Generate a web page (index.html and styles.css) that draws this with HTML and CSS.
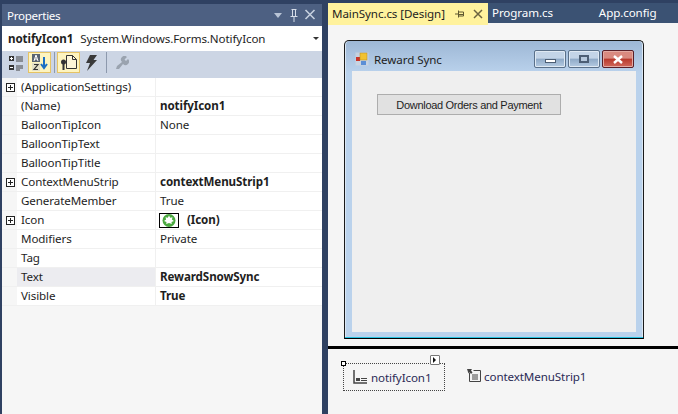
FILE: index.html
```html
<!DOCTYPE html>
<html lang="en">
<head>
  <meta charset="UTF-8">
  <title>Properties</title>
  <link rel="stylesheet" href="styles.css">
</head>
<body>
  <div class="props">
    <div class="props-title">
      <span class="props-title-text">Properties</span>
      <svg class="title-btns" width="62" height="16" viewBox="0 0 62 16">
        <path d="M17 6h8l-4 5z" fill="#b9c4d6"/>
        <path d="M34.500 2.500h5M35.500 2.500v7M38.500 2.500v7M33.500 9.500h7M37 10v5" fill="none" stroke="#d5dce8" stroke-width="1"/>
        <path d="M48.500 3l9 9M57.500 3l-9 9" stroke="#c5cfdf" stroke-width="1.600"/>
      </svg>
    </div>
    <div class="props-combo">
      <b>notifyIcon1</b><span class="combo-type">System.Windows.Forms.NotifyIcon</span>
      <span class="combo-arrow"></span>
    </div>
    <div class="props-tools">
      <svg class="tool" width="16" height="16" viewBox="0 0 16 16">
        <path d="M0 1h5v5H0zM0 10h5v5H0z" fill="#333"/>
        <path d="M1 3.500h3M2.500 2v3M1 12.500h3" stroke="#fff"/>
        <path d="M7 2h7M7 4h7M7 6h7M7 11h7M7 13h7M7 15h4" stroke="#444"/>
      </svg>
      <span class="tool-on tool-sort">
        <svg width="16" height="17" viewBox="0 0 16 17">
          <rect x="0" y="0" width="8" height="8" fill="#5a6472"/>
          <rect x="0" y="9" width="8" height="8" fill="#e3e0c8"/>
          <path d="M2 7l2-6 2 6M3 5h2" stroke="#fff" fill="none"/>
          <path d="M2 10.500h4l-4 5h4" stroke="#333" fill="none" stroke-width="1.200"/>
          <path d="M12 3v11M9 10l3 4 3-4" stroke="#1c6fc4" stroke-width="2" fill="none"/>
        </svg>
      </span>
      <span class="tool-sep"></span>
      <span class="tool-on tool-page">
        <svg width="18" height="17" viewBox="0 0 18 17">
          <path d="M6.500 1.500h6l4 4v9h-10z" fill="#fdf6d8" stroke="#333"/>
          <path d="M12.500 1.500v4h4" fill="none" stroke="#333"/>
          <circle cx="3.500" cy="8" r="2.500" fill="#333"/>
          <rect x="2.500" y="9" width="2" height="7" fill="#333"/>
        </svg>
      </span>
      <svg class="tool tool-bolt" width="13" height="16" viewBox="0 0 13 16">
        <path d="M5 0h7L8.500 5H12L2 16l3-8H1z" fill="#3a3a3a"/>
      </svg>
      <span class="tool-sep tool-sep2"></span>
      <svg class="tool tool-wrench" width="14" height="14" viewBox="0 0 14 14">
        <path d="M1 13l1-3 5-4a3.500 3.500 0 0 1 5-5L9.500 3.500l1.500 1.500L13 3a3.500 3.500 0 0 1-5 5l-4 5z" fill="#9aa3af"/>
      </svg>
    </div>
    <div class="props-grid">
      <div class="row"><span class="gutter"><i class="plus"></i></span><span class="name">(ApplicationSettings)</span><span class="val"></span></div>
      <div class="row"><span class="gutter"></span><span class="name">(Name)</span><span class="val bold">notifyIcon1</span></div>
      <div class="row"><span class="gutter"></span><span class="name">BalloonTipIcon</span><span class="val">None</span></div>
      <div class="row"><span class="gutter"></span><span class="name">BalloonTipText</span><span class="val"></span></div>
      <div class="row"><span class="gutter"></span><span class="name">BalloonTipTitle</span><span class="val"></span></div>
      <div class="row"><span class="gutter"><i class="plus"></i></span><span class="name">ContextMenuStrip</span><span class="val bold">contextMenuStrip1</span></div>
      <div class="row"><span class="gutter"></span><span class="name">GenerateMember</span><span class="val">True</span></div>
      <div class="row"><span class="gutter"><i class="plus"></i></span><span class="name">Icon</span><span class="val bold val-icon">
        <span class="icon-thumb">
          <svg width="16" height="13" viewBox="0 0 16 13">
            <circle cx="8" cy="6.500" r="6.500" fill="#4aa83f"/>
            <path d="M8 1.500l1.200 2.300 2.300-.6-.6 2.400L13 7l-2.500 1 .3 2L8 9 5.200 10l.3-2L3 7l2.100-1.400-.6-2.400 2.300.6z" fill="#fff"/>
          </svg>
        </span>(Icon)</span></div>
      <div class="row"><span class="gutter"></span><span class="name">Modifiers</span><span class="val">Private</span></div>
      <div class="row"><span class="gutter"></span><span class="name">Tag</span><span class="val"></span></div>
      <div class="row row-sel"><span class="gutter"></span><span class="name">Text</span><span class="val bold">RewardSnowSync</span></div>
      <div class="row"><span class="gutter"></span><span class="name">Visible</span><span class="val bold">True</span></div>
    </div>
  </div>

  <div class="doc">
    <div class="tabs">
      <div class="tab tab-active">
        <span>MainSync.cs [Design]</span>
        <svg class="tab-pin" width="10" height="10" viewBox="0 0 10 10"><path d="M0 5h3M3.500 1.500v7M3.500 3h5v4h-5M4 5.500h4" stroke="#5f5830" fill="none"/></svg>
        <svg class="tab-close" width="10" height="10" viewBox="0 0 10 10"><path d="M1 1l8 8M9 1l-8 8" stroke="#6b6340" stroke-width="1.500"/></svg>
      </div>
      <div class="tab tab-program">Program.cs</div>
      <div class="tab tab-config">App.config</div>
    </div>
    <div class="design">
      <div class="form">
        <div class="form-title">
          <svg class="form-icon" width="14" height="14" viewBox="0 0 14 14">
            <rect x="0.500" y="0.500" width="13" height="13" fill="#d8dbe0" opacity="0.600"/>
            <rect x="1" y="5" width="4" height="4" fill="#c9342a"/>
            <rect x="5" y="1" width="7" height="7" fill="#f2c230" stroke="#b98a1c" stroke-width="0.500"/>
            <rect x="6" y="9" width="5" height="4" fill="#5b8fd6"/>
          </svg>
          <span class="form-name">Reward Sync</span>
          <span class="win-btns">
            <span class="win-btn"><i class="glyph-min"></i></span>
            <span class="win-btn"><i class="glyph-max"></i></span>
            <span class="win-btn win-close">
              <svg width="12" height="9" viewBox="0 0 12 9"><path d="M2 1l8 7M10 1L2 8" stroke="#fff" stroke-width="2.400"/></svg>
            </span>
          </span>
        </div>
        <div class="form-client">
          <div class="form-button">Download Orders and Payment</div>
        </div>
      </div>
    </div>
    <div class="tray">
      <div class="tray-item tray-selected">
        <i class="handle"></i>
        <i class="smart-tag"></i>
        <svg width="14" height="14" viewBox="0 0 14 14"><path d="M1 0v13h13" fill="none" stroke="#444" stroke-width="1.500"/><path d="M3 8h4v3H3zM8 8h6v1H8zM8 10h6v1H8z" fill="#444"/></svg>
        <span>notifyIcon1</span>
      </div>
      <div class="tray-item tray-plain">
        <svg width="14" height="14" viewBox="0 0 14 14"><path d="M2.500 3.500v9h11v-11h-7" fill="none" stroke="#444"/><path d="M5 6h6M5 8h6M5 10h6" stroke="#444"/><path d="M0 0h5l-1 1.500 1.500 2L4 5 2.500 3 1.500 4.500z" fill="#444"/></svg>
        <span>contextMenuStrip1</span>
      </div>
    </div>
  </div>
</body>
</html>
```
FILE: styles.css
```css
html, body {
  margin: 0;
  height: 100%;
}
body {
  display: flex;
  width: 678px;
  height: 414px;
  overflow: hidden;
  background: #2f4162;
  font-family: "Noto Sans", "Open Sans", sans-serif;
  font-size: 11.6px;
  letter-spacing: -0.1px;
  color: #1e1e1e;
}

/* properties panel */
.props {
  width: 320px;
  height: 410px;
  margin: 4px 0 0 2px;
  background: #fff;
  display: flex;
  flex-direction: column;
}
.props-title {
  height: 22px;
  flex: none;
  background: #4d6082;
  color: #fff;
  display: flex;
  align-items: center;
  justify-content: space-between;
  padding: 0 3px 0 5px;
}
.props-title-text {
  letter-spacing: -0.3px;
}
.props-combo {
  height: 25px;
  flex: none;
  display: flex;
  align-items: center;
  padding-left: 6px;
  position: relative;
}
.combo-type {
  margin-left: 7px;
}
.combo-arrow {
  position: absolute;
  right: 3px;
  top: 11px;
  border: 3px solid transparent;
  border-top: 3px solid #333;
}
.props-tools {
  height: 27px;
  flex: none;
  box-sizing: border-box;
  background: #ccd5e4;
  display: flex;
  align-items: center;
  padding: 0 0 4px 7px;
}
.tool-on {
  height: 21px;
  background: #fdf4bf;
  border: 1px solid #e5c365;
  display: flex;
  align-items: center;
  justify-content: center;
  box-sizing: border-box;
}
.tool-sort {
  width: 23px;
  margin-left: 3px;
}
.tool-page {
  width: 23px;
  margin-left: 2px;
}
.tool-sep {
  width: 1px;
  height: 21px;
  background: #8d99ad;
  margin-left: 3px;
}
.tool-bolt {
  margin-left: 5px;
}
.tool-sep2 {
  margin-left: 8px;
}
.tool-wrench {
  margin-left: 8px;
}
.props-grid {
  flex: 1;
  background: #f6f6f6;
}
.row {
  height: 19px;
  display: flex;
  box-sizing: border-box;
  border-bottom: 1px solid #f0f0f0;
  line-height: 18px;
}
.gutter {
  width: 15px;
  flex: none;
  background: #f6f6f6;
  display: flex;
  align-items: center;
  box-sizing: border-box;
  padding-left: 4px;
}
.plus {
  width: 9px;
  height: 9px;
  box-sizing: border-box;
  border: 1px solid #222;
  background:
    linear-gradient(#222, #222) center / 5px 1px no-repeat,
    linear-gradient(#222, #222) center / 1px 5px no-repeat,
    #fff;
}
.name {
  width: 139px;
  flex: none;
  padding-left: 4px;
  box-sizing: border-box;
  background: #fff;
  border-right: 1px solid #f0f0f0;
}
.val {
  flex: 1;
  background: #fff;
  padding-left: 4px;
  white-space: nowrap;
}
.val.bold {
  font-weight: 700;
}
.row-sel .name {
  background: #ececf0;
}
.val-icon {
  display: flex;
  align-items: center;
}
.icon-thumb {
  width: 20px;
  height: 15px;
  box-sizing: border-box;
  border: 1px solid #000;
  display: flex;
  align-items: center;
  justify-content: center;
  margin: 0 8px 0 -1px;
}

/* designer */
.doc {
  width: 350px;
  margin-left: 6px;
  display: flex;
  flex-direction: column;
}
.tabs {
  height: 20px;
  margin-top: 3px;
  flex: none;
  display: flex;
  background: #3b5273;
  color: #fff;
}
.tab {
  line-height: 20px;
  white-space: nowrap;
}
.tab-active {
  width: 160px;
  height: 22px;
  position: relative;
  z-index: 1;
  background: #fff29d;
  color: #1e1e1e;
  display: flex;
  align-items: center;
  padding-left: 4px;
  box-sizing: border-box;
}
.tab-pin {
  margin-left: 10px;
}
.tab-close {
  margin-left: 8px;
}
.tab-program {
  margin-left: 4px;
}
.tab-config {
  margin-left: 46px;
}
.design {
  height: 326px;
  flex: none;
  background: #f5f5f5;
  box-sizing: border-box;
  padding: 17px 0 0 16px;
  border-bottom: 3px solid #000;
}
.form {
  width: 300px;
  height: 299px;
  box-sizing: border-box;
  border: 1px solid #1a1a1a;
  border-bottom-color: #000;
  border-radius: 5px 5px 0 0;
  background: linear-gradient(#9db7d5, #bad2ec 32px);
  box-shadow: inset 0 -1px 0 #27c2e0, inset 1px 0 0 #dbe7f3, inset -1px 0 0 #dbe7f3;
  padding: 0 7px 6px 7px;
  display: flex;
  flex-direction: column;
}
.form-title {
  height: 30px;
  flex: none;
  box-sizing: border-box;
  display: flex;
  align-items: center;
  padding: 6px 0 0 3px;
}
.form-name {
  margin-left: 5px;
}
.win-btns {
  margin-left: auto;
  margin-right: 2px;
  display: flex;
  gap: 2px;
}
.win-btn {
  width: 32px;
  height: 18px;
  box-sizing: border-box;
  border: 1px solid #5a7089;
  border-radius: 2px;
  background: linear-gradient(#c3d4e7 45%, #8ea9c6 50%, #b5cbe2);
  box-shadow: inset 0 0 0 1px #dfe9f3;
  display: flex;
  align-items: center;
  justify-content: center;
}
.win-close {
  border-color: #5a1f28;
  background: linear-gradient(#d98a80 45%, #b8392c 50%, #d0685c);
  box-shadow: inset 0 0 0 1px #e2aaa3;
}
.glyph-min {
  width: 11px;
  height: 4px;
  margin-top: 3px;
  box-sizing: border-box;
  background: #fff;
  border: 1px solid #4c5e74;
}
.glyph-max {
  width: 10px;
  height: 8px;
  box-sizing: border-box;
  background: #b6c8dc;
  border: 2px solid #4c5e74;
}
.form-client {
  flex: 1;
  background: #efefef;
  padding: 23px 0 0 25px;
}
.form-button {
  width: 184px;
  height: 21px;
  box-sizing: border-box;
  background: #e1e1e1;
  border: 1px solid #adadad;
  text-align: center;
  line-height: 20px;
  font-family: "Liberation Sans", sans-serif;
  font-size: 11px;
  letter-spacing: -0.3px;
}
.tray {
  flex: 1;
  background: #f5f5f5;
  display: flex;
  align-items: flex-start;
  padding: 14px 0 0 15px;
  color: #2b2b55;
}
.tray-item {
  display: flex;
  align-items: center;
  gap: 4px;
  position: relative;
  height: 28px;
  box-sizing: border-box;
}
.tray-selected {
  width: 102px;
  border: 1px dotted #444;
  padding-left: 9px;
}
.tray-plain {
  margin-left: 22px;
  margin-top: -1px;
  gap: 3px;
}
.handle {
  position: absolute;
  left: -3px;
  top: -3px;
  width: 5px;
  height: 5px;
  box-sizing: border-box;
  background: #fff;
  border: 1px solid #000;
}
.smart-tag {
  position: absolute;
  right: 4px;
  top: -9px;
  width: 10px;
  height: 10px;
  box-sizing: border-box;
  background: #fff;
  border: 1px solid #777;
  border-radius: 1px;
}
.smart-tag::after {
  content: "";
  position: absolute;
  left: 2px;
  top: 1px;
  border: 3px solid transparent;
  border-left: 3px solid #111;
  border-right: 0;
}
```
